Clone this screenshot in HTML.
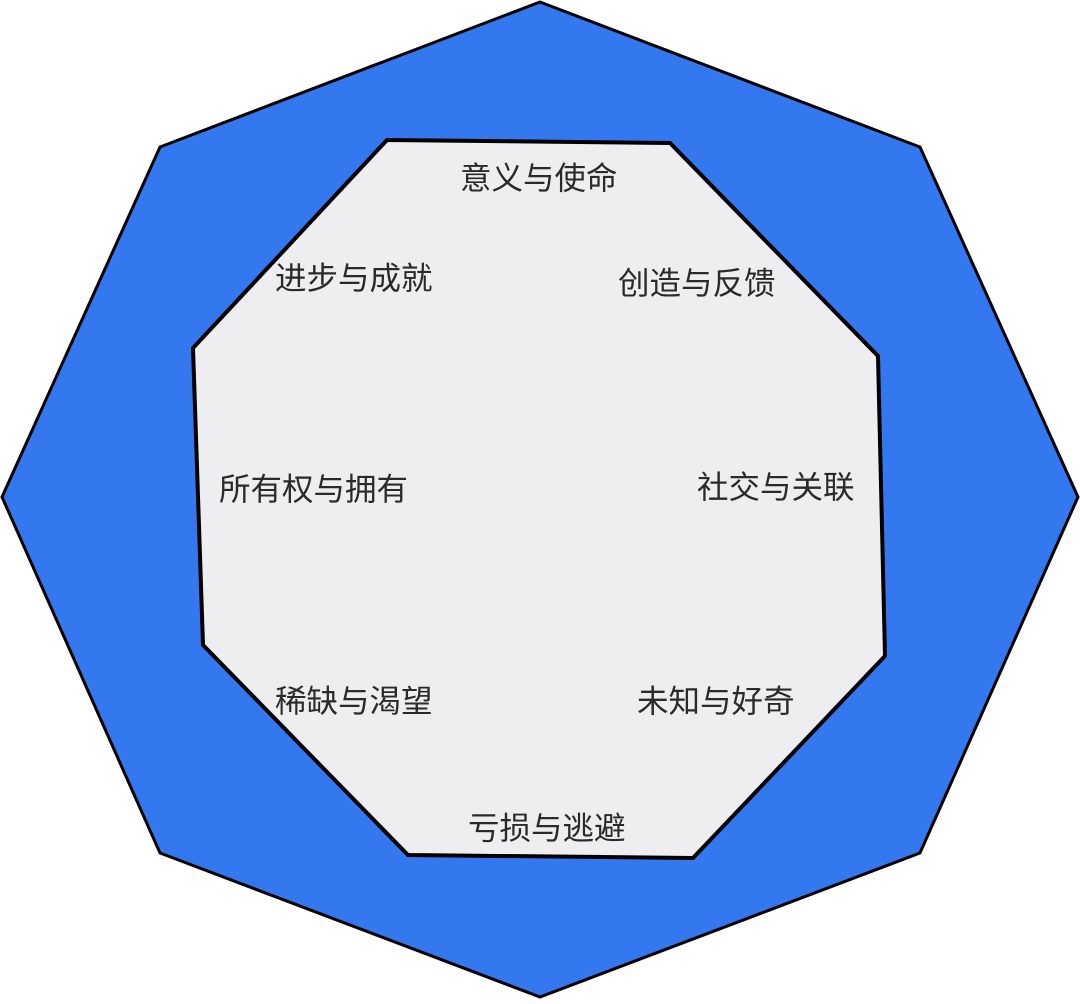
<!DOCTYPE html>
<html><head><meta charset="utf-8"><style>
html,body{margin:0;padding:0;background:#fff;}
svg text{font-family:"Liberation Sans","Noto Sans CJK SC",sans-serif;font-size:31.5px;fill:#2a2a2a;dominant-baseline:central;}
</style></head><body>
<svg width="1080" height="999" viewBox="0 0 1080 999">
<polygon points="540,2 920,147 1078,497 920,853 540,997 160,853 2,497 160,147" fill="#3478f0" stroke="#000" stroke-width="3"/>
<polygon points="387,140 670,143 878,356 885,656 693,858 408,855 203,645 193,348" fill="#eeedf0" stroke="#000" stroke-width="4"/>
<text x="460" y="178">意义与使命</text>
<text x="275" y="278">进步与成就</text>
<text x="618" y="283">创造与反馈</text>
<text x="219" y="489">所有权与拥有</text>
<text x="697" y="487">社交与关联</text>
<text x="275" y="701">稀缺与渴望</text>
<text x="637" y="701">未知与好奇</text>
<text x="468" y="828">亏损与逃避</text>
</svg>
</body></html>
